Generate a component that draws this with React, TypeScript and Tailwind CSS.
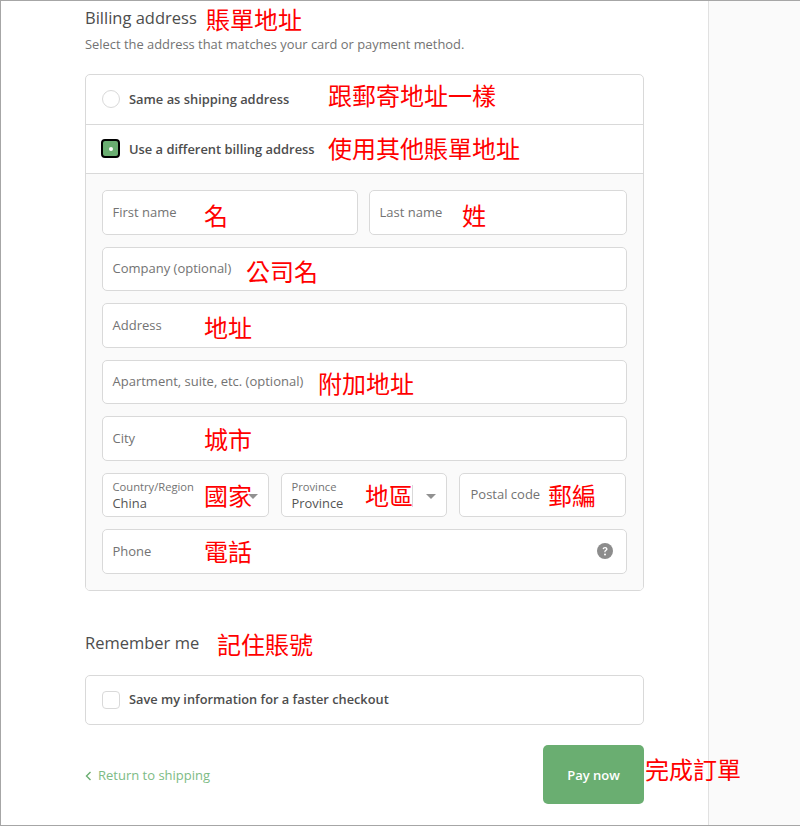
import React from "react";

const FONT = "font-['Open_Sans','Noto_Sans',sans-serif]";

function Note({ children, x, y, size = 24 }: { children: React.ReactNode; x: number; y: number; size?: number }) {
  return (
    <span
      className="absolute whitespace-nowrap font-['Noto_Sans_CJK_TC',sans-serif] font-normal leading-none text-[#ff0000]"
      style={{ left: x, top: y, fontSize: size }}
    >
      {children}
    </span>
  );
}

function Field({ label, className = "" }: { label: string; className?: string }) {
  return (
    <div className={`relative flex h-[44.5px] items-center rounded-[5px] border border-[#d9d9d9] bg-white pl-[10px] text-[13px] text-[#737373] ${className}`}>
      {label}
    </div>
  );
}

function SelectField({ label, value, className = "", divider = false }: { label: string; value: string; className?: string; divider?: boolean }) {
  return (
    <div className={`relative flex h-[44.5px] flex-col justify-center rounded-[5px] border border-[#d9d9d9] bg-white pl-[10px] pt-[2px] ${className}`}>
      <span className="text-[11.2px] leading-[14px] text-[#737373]">{label}</span>
      <span className="text-[12.9px] leading-[18px] text-[#545454]">{value}</span>
      {divider && <span className="absolute right-[33px] top-[11px] h-[22px] w-px bg-[#d9d9d9]" />}
      <svg className="absolute right-[10px] top-[20px]" width="10" height="5" viewBox="0 0 10 5">
        <path d="M0 0h10L5 5z" fill="#919191" />
      </svg>
    </div>
  );
}

export default function App() {
  return (
    <div className={`relative flex h-[826px] w-[800px] overflow-hidden border-t border-b border-l border-[#a6a6a6] bg-white ${FONT}`}>
      <main className="w-[707px] pl-[84px]">
        <div className="w-[559px]">
          <h2 className="mt-[5px] h-[24px] text-[16.5px] leading-[24px] text-[#4d4d4d]">Billing address</h2>
          <p className="mt-[4px] h-[20px] text-[12.9px] leading-[20px] text-[#737373]">Select the address that matches your card or payment method.</p>

          <div className="mt-[20px] overflow-hidden rounded-[5px] border border-[#d9d9d9]">
            <div className="flex h-[48.5px] items-center gap-[9px] pl-[16px] text-[12.9px] font-semibold text-[#4d4d4d]">
              <span className="h-[18px] w-[18px] rounded-full border border-[#d9d9d9] bg-white" />
              Same as shipping address
            </div>
            <div className="flex h-[49.5px] items-center gap-[9px] border-t border-[#d9d9d9] pl-[15px] text-[12.9px] font-semibold text-[#4d4d4d]">
              <span className="flex h-[19px] w-[19px] items-center justify-center rounded-[4px] border-2 border-black bg-[#6aae71]">
                <span className="h-[4px] w-[4px] rounded-full bg-white" />
              </span>
              <span className="pt-[1px]">Use a different billing address</span>
            </div>
            <div className="flex flex-col gap-[12px] border-t border-[#d9d9d9] bg-[#fafafa] pb-[16px] pl-[15.5px] pr-[16.5px] pt-[16px]">
              <div className="flex gap-[11px]">
                <Field label="First name" className="w-[256px]" />
                <Field label="Last name" className="flex-1" />
              </div>
              <Field label="Company (optional)" />
              <Field label="Address" />
              <Field label="Apartment, suite, etc. (optional)" />
              <Field label="City" />
              <div className="flex gap-[12px]">
                <SelectField label="Country/Region" value="China" className="w-[167px]" />
                <SelectField label="Province" value="Province" className="w-[166px]" divider />
                <Field label="Postal code" className="w-[167px] pl-[11px]" />
              </div>
              <div className="relative">
                <Field label="Phone" />
                <svg className="absolute right-[14px] top-[14px]" width="16" height="16" viewBox="0 0 16 16">
                  <circle cx="8" cy="8" r="8" fill="#8c8c8c" />
                  <path d="M5.6 6.1c.1-1.4 1.1-2.2 2.5-2.2s2.4.8 2.4 2c0 1-.6 1.5-1.2 1.9-.6.4-.8.7-.8 1.4H7.3c0-1.1.3-1.6 1-2.1.5-.4.8-.6.8-1.1 0-.5-.4-.8-1-.8-.7 0-1 .4-1.1 1z" fill="#fff" />
                  <circle cx="8" cy="11.4" r="1" fill="#fff" />
                </svg>
              </div>
            </div>
          </div>

          <h2 className="mt-[40px] h-[24px] text-[16.5px] leading-[24px] text-[#4d4d4d]">Remember me</h2>
          <div className="mt-[20px] flex h-[50px] items-center gap-[9px] rounded-[5px] border border-[#d9d9d9] pl-[16px] text-[12.8px] font-semibold text-[#4d4d4d]">
            <span className="h-[18px] w-[18px] rounded-[4px] border border-[#d9d9d9] bg-white" />
            Save my information for a faster checkout
          </div>

          <div className="mt-[20px] flex items-center justify-between">
            <span className="flex items-center gap-[6px] pt-[3px] text-[13px] text-[#7dbb85]">
              <svg width="7" height="10" viewBox="0 0 7 10" fill="none">
                <path d="M5.5 1 1.5 5l4 4" stroke="#6aae71" strokeWidth="1.4" />
              </svg>
              Return to shipping
            </span>
            <button className="flex h-[59px] w-[101px] items-center justify-center rounded-[5px] bg-[#6aae71] pt-[3px] text-[13px] font-semibold text-white">
              Pay now
            </button>
          </div>
        </div>
      </main>
      <aside className="flex-1 border-l border-[#e1e1e1] bg-[#fafafa]" />

      <Note x={205} y={6}>賬單地址</Note>
      <Note x={327} y={82}>跟郵寄地址一樣</Note>
      <Note x={327} y={135}>使用其他賬單地址</Note>
      <Note x={203} y={202}>名</Note>
      <Note x={461} y={202}>姓</Note>
      <Note x={245} y={258}>公司名</Note>
      <Note x={203} y={314}>地址</Note>
      <Note x={317} y={370}>附加地址</Note>
      <Note x={203} y={426}>城市</Note>
      <Note x={203} y={482}>國家</Note>
      <Note x={364} y={482}>地區</Note>
      <Note x={547} y={482}>郵編</Note>
      <Note x={203} y={538}>電話</Note>
      <Note x={216} y={631}>記住賬號</Note>
      <Note x={644} y={756}>完成訂單</Note>
    </div>
  );
}
